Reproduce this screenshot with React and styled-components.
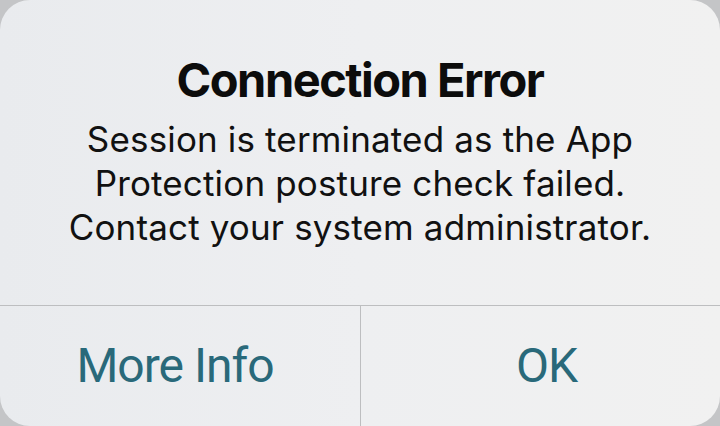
import React from "react";
import styled, { createGlobalStyle } from "styled-components";

const Global = createGlobalStyle`
  html, body { margin: 0; padding: 0; background: #c4c5c7; }
  body { width: 720px; height: 426px; overflow: hidden; }
  * { box-sizing: border-box; }
`;

const Card = styled.div`
  width: 720px;
  height: 426px;
  display: flex;
  flex-direction: column;
  border-radius: 30px;
  overflow: hidden;
  background: linear-gradient(90deg, #e9ebee 0%, #eeeff1 50%, #f1f1f1 100%);
`;

const Content = styled.div`
  flex: 1;
  display: flex;
  flex-direction: column;
  align-items: center;
  padding-top: 52px;
  text-align: center;
`;

const Title = styled.h1`
  margin: 0;
  font-family: Inter, "Liberation Sans", sans-serif;
  font-weight: 700;
  font-size: 47px;
  letter-spacing: -1.5px;
  line-height: 56px;
  color: #0c0c0c;
`;

const Message = styled.p`
  margin: 9px 0 0;
  font-family: Inter, "Liberation Sans", sans-serif;
  font-weight: 400;
  font-size: 35px;
  letter-spacing: 0.15px;
  line-height: 44px;
  color: #111;
`;

const ButtonRow = styled.div`
  height: 121px;
  display: grid;
  grid-template-columns: 1fr 1fr;
  border-top: 1.5px solid #bdbec0;
`;

const Button = styled.button`
  border: none;
  background: transparent;
  border-left: ${(p) => (p.$divider ? "1px solid #bdbec0" : "none")};
  font-family: Roboto, "Liberation Sans", sans-serif;
  font-size: 48px;
  letter-spacing: -1px;
  color: #29697a;
  display: flex;
  align-items: center;
  justify-content: center;
  padding: 0 ${(p) => (p.$divider ? "0 2px 12px" : "10px 2px 0")};
`;

export default function App() {
  return (
    <>
      <Global />
      <Card>
        <Content>
          <Title>Connection Error</Title>
          <Message>
            Session is terminated as the App
            <br />
            Protection posture check failed.
            <br />
            Contact your system administrator.
          </Message>
        </Content>
        <ButtonRow>
          <Button>More Info</Button>
          <Button $divider>OK</Button>
        </ButtonRow>
      </Card>
    </>
  );
}
